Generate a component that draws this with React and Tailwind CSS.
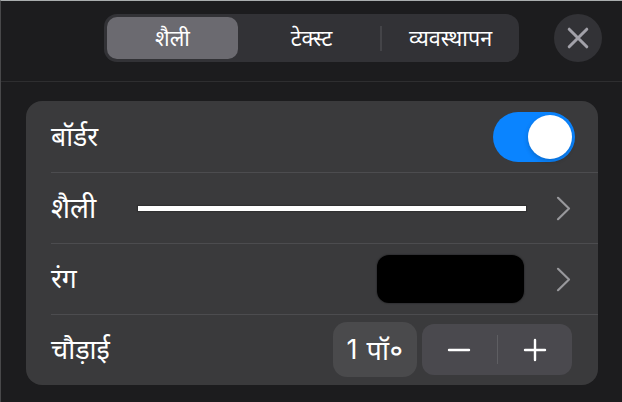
import React, { useState } from 'react';

const tabs = [
  { label: 'शैली', width: 'w-[131px]', text: '' },
  { label: 'टेक्स्ट', width: 'w-[144px]', text: 'pl-[3px]' },
  { label: 'व्यवस्थापन', width: 'w-[134px]', text: 'pl-[3px]' },
];

const Chevron = () => (
  <svg className="w-[15px] h-[25px] shrink-0" fill="none" stroke="#98989c" viewBox="0 0 15 25">
    <path strokeLinecap="round" strokeLinejoin="round" strokeWidth={2.2} d="M2 1.8L13 12.5L2 23.2" />
  </svg>
);

const Row = ({ label, labelClass, className, children }) => (
  <div className={`flex items-center ml-[25px] border-[#4c4c4f] ${className}`}>
    <span className={`leading-none whitespace-nowrap ${labelClass}`}>{label}</span>
    {children}
  </div>
);

const App = () => {
  const [activeTab, setActiveTab] = useState(0);
  const [border, setBorder] = useState(true);
  const [width, setWidth] = useState(1);

  return (
    <div className="w-[622px] h-[402px] overflow-hidden bg-[#1c1c1e] border-t border-t-[#a9adae] border-l border-l-[#48484a] text-white font-['Noto_Sans','Noto_Sans_Devanagari',sans-serif]">
      <header className="flex h-[81px] pt-[13px] pl-[103px] border-b border-[#2e2e30]">
        <div className="flex w-[415px] h-[48px] p-[3px] rounded-[13px] bg-[#323236]">
          {tabs.map((tab, i) => (
            <button
              key={tab.label}
              onClick={() => setActiveTab(i)}
              className={`${tab.width} h-[42px] flex items-center justify-center text-[21.5px] leading-none whitespace-nowrap ${
                activeTab === i ? 'rounded-[10px] bg-[#6b6a70]' : ''
              }`}
            >
              {i === 2 && <span className="w-0.5 h-[25px] -ml-0.5 bg-[#444448]" />}
              <span className={`flex-1 pb-px ${tab.text}`}>{tab.label}</span>
            </button>
          ))}
        </div>
        <button className="flex items-center justify-center w-[48px] h-[48px] ml-[35px] rounded-full bg-[#323236]">
          <svg className="w-[22px] h-[22px]" fill="none" stroke="#a2a1a9" viewBox="0 0 22 22">
            <path strokeLinecap="round" strokeWidth={3} d="M2.2 2.2L19.8 19.8M19.8 2.2L2.2 19.8" />
          </svg>
        </button>
      </header>

      <main className="w-[572px] h-[284px] mt-[19px] ml-[25px] rounded-[16px] bg-[#3a3a3c]">
        <Row label="बॉर्डर" labelClass="text-[26.5px]" className="h-[72px] border-b">
          <button
            onClick={() => setBorder(!border)}
            className={`flex w-[82px] h-[50px] p-[3px] ml-auto mr-[23px] mt-px rounded-full ${
              border ? 'justify-end bg-[#0a84ff]' : 'bg-[#5a5a5e]'
            }`}
          >
            <span className="w-[44px] h-[44px] rounded-full bg-white shadow-[0_2px_5px_rgba(0,0,0,0.2)]" />
          </button>
        </Row>
        <Row label="शैली" labelClass="text-[28px] pb-0.5" className="h-[71px] border-b">
          <span className="w-[388px] h-[5px] ml-auto mr-[30px] bg-white shadow-[0_0_1px_1px_#303032]" />
          <div className="mr-[27px]">
            <Chevron />
          </div>
        </Row>
        <Row label="रंग" labelClass="text-[26.5px] pb-px" className="h-[71px] border-b">
          <span className="w-[147px] h-[48px] ml-auto mr-[32px] rounded-[12px] bg-black shadow-[0_0_1px_1px_#303032]" />
          <div className="mr-[27px]">
            <Chevron />
          </div>
        </Row>
        <Row label="चौड़ाई" labelClass="text-[27px] pb-0.5" className="h-[70px] pb-px">
          <div className="flex items-center justify-center w-[84px] h-[55px] ml-auto mr-[5px] rounded-[14px] bg-[#4a4a4c] text-[27px] leading-none whitespace-nowrap">
            <span className="mr-[9px] font-['Inter']">{width}</span>
            <span className="pb-px">पॉ</span>
            <span className="text-[34px] leading-none pt-[5px]">॰</span>
          </div>
          <div className="flex items-center w-[150px] h-[51px] mr-[26px] rounded-[12px] bg-[#4a494e]">
            <button onClick={() => setWidth(Math.max(1, width - 1))} className="flex-1 flex justify-center">
              <svg className="w-[24px] h-[24px]" fill="none" stroke="white" viewBox="0 0 24 24">
                <path strokeLinecap="round" strokeWidth={2.4} d="M2 12H22" />
              </svg>
            </button>
            <span className="w-px h-[29px] bg-[#5e5e62]" />
            <button onClick={() => setWidth(width + 1)} className="flex-1 flex justify-center">
              <svg className="w-[24px] h-[24px]" fill="none" stroke="white" viewBox="0 0 24 24">
                <path strokeLinecap="round" strokeWidth={2.4} d="M2 12H22M12 2V22" />
              </svg>
            </button>
          </div>
        </Row>
      </main>
    </div>
  );
};

export default App;
